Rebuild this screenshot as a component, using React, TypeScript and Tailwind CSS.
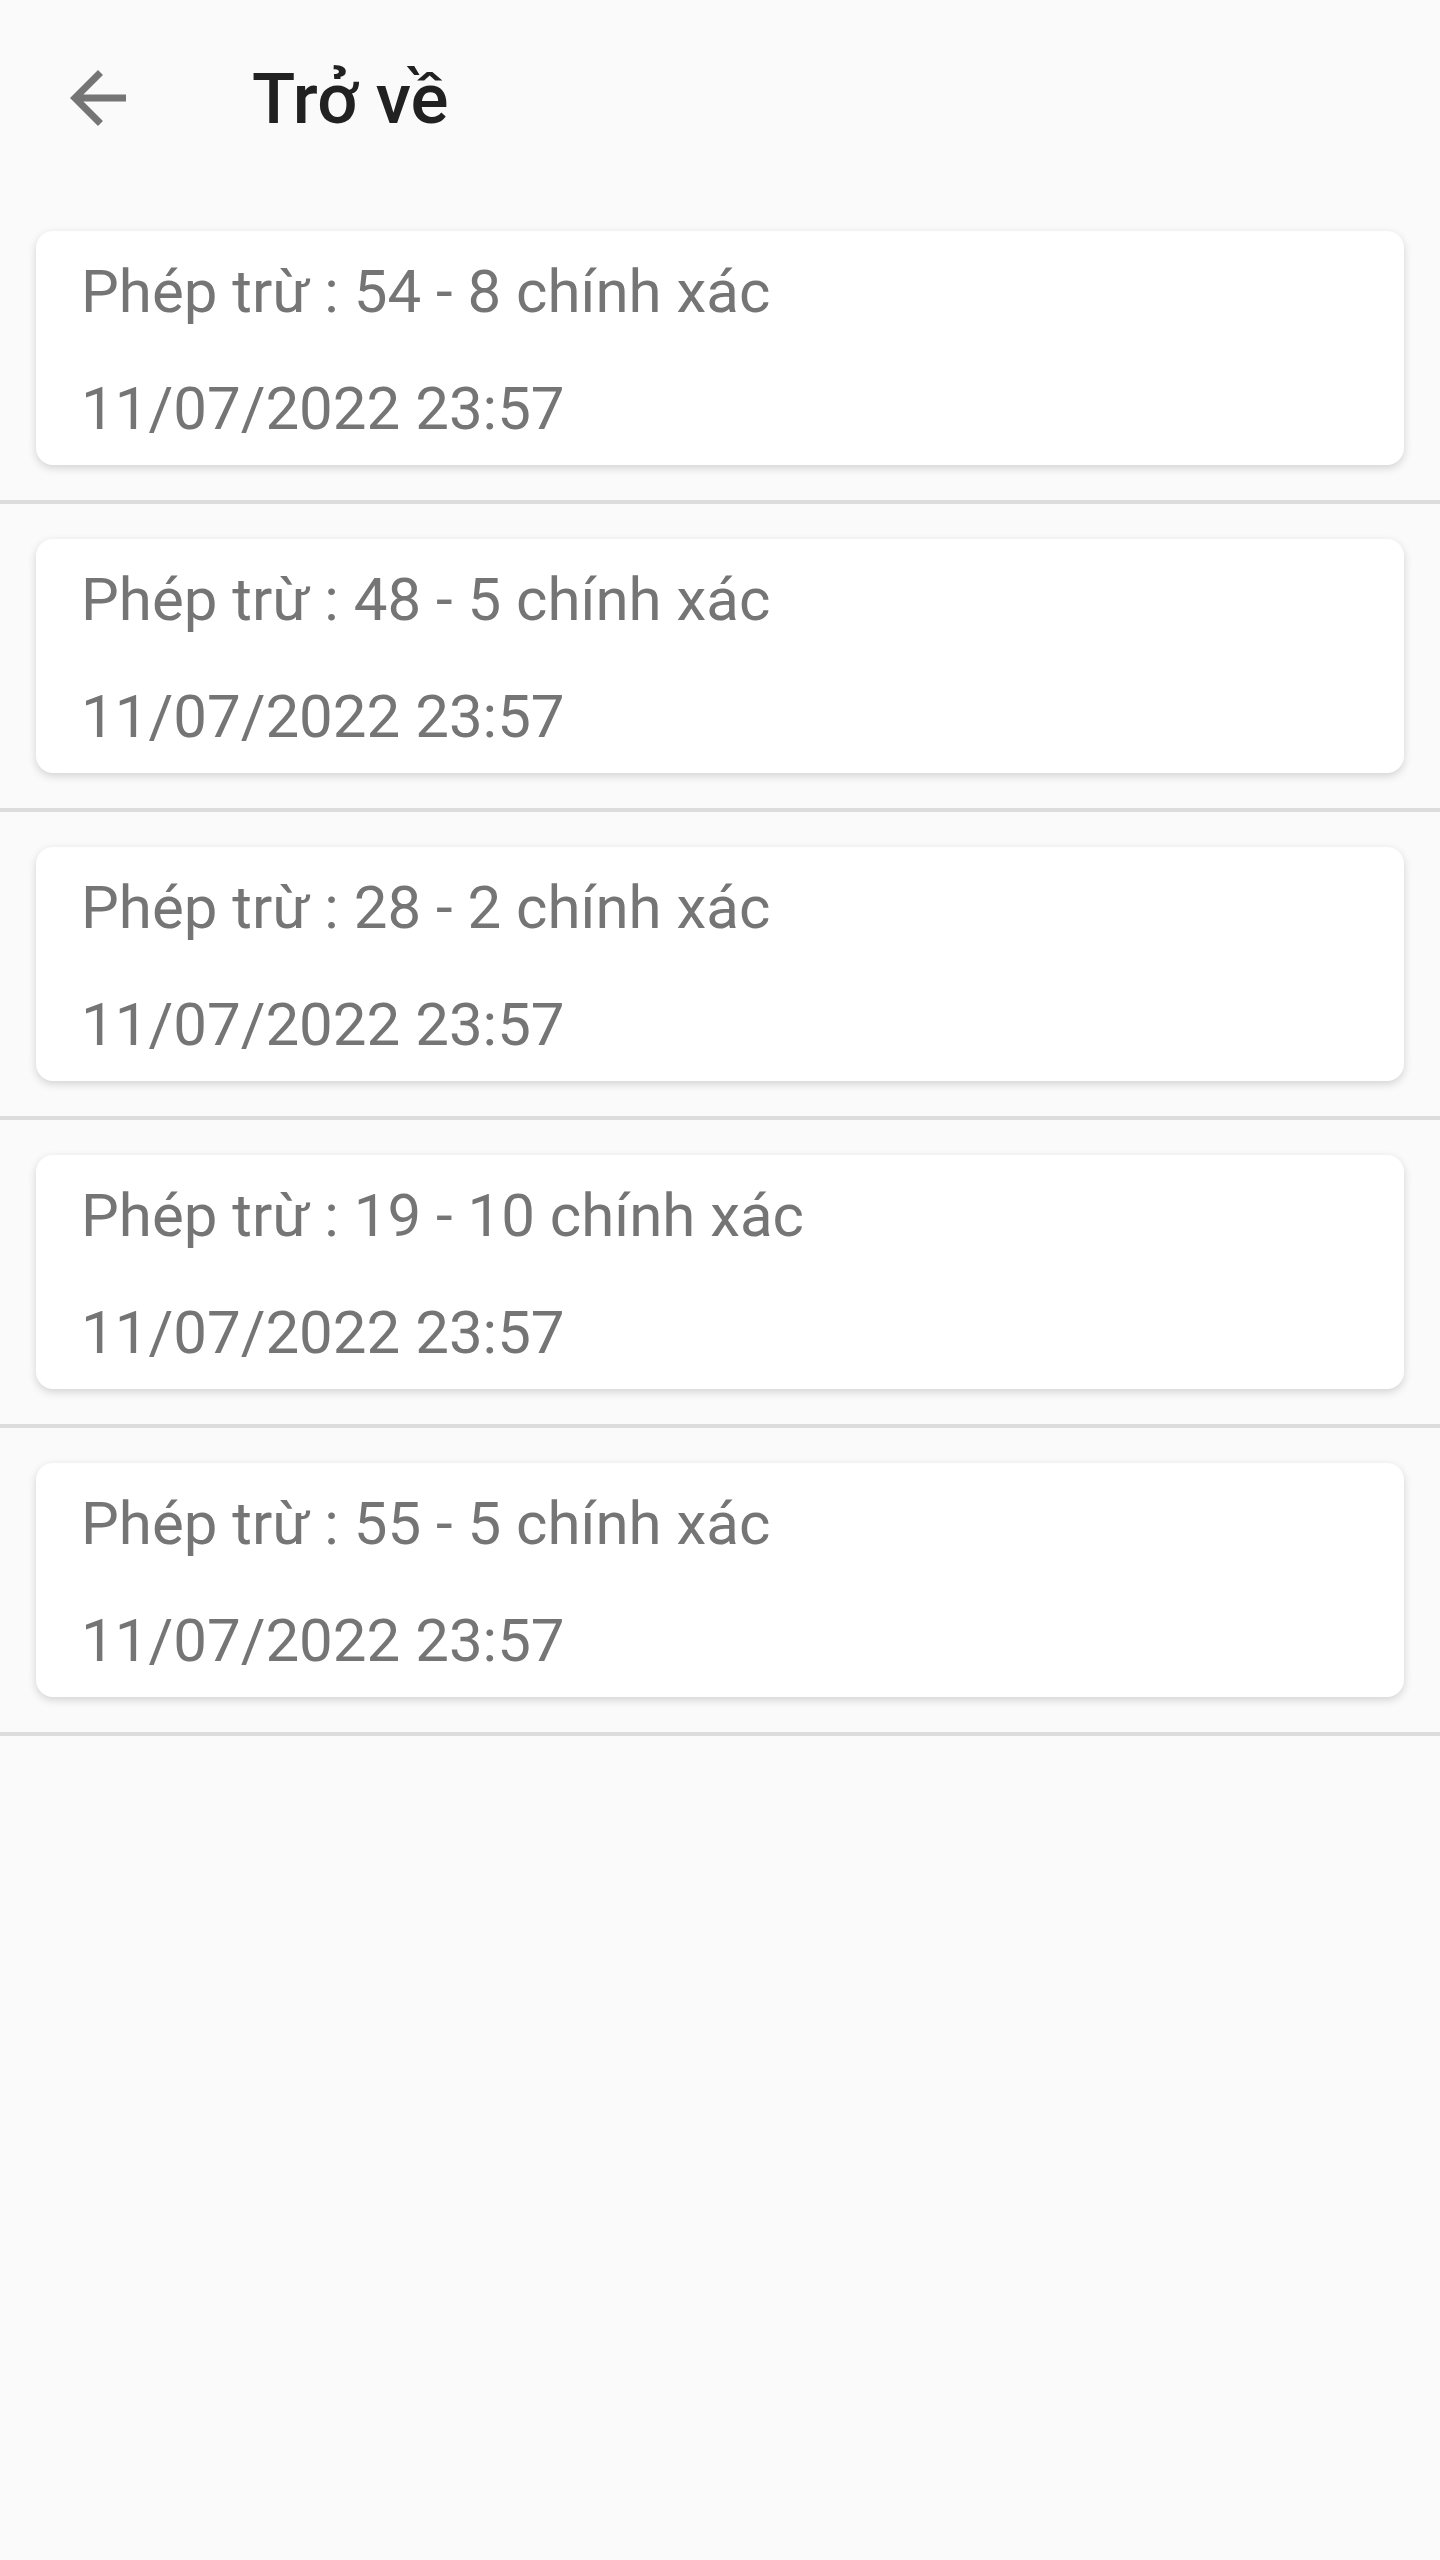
const results = [
  { a: 54, b: 8 },
  { a: 48, b: 5 },
  { a: 28, b: 2 },
  { a: 19, b: 10 },
  { a: 55, b: 5 },
]

function BackIcon() {
  return (
    <svg className="w-[84px] h-[84px]" viewBox="0 0 24 24" fill="#757575">
      <path d="M20 11H7.83l5.59-5.59L12 4l-8 8 8 8 1.41-1.41L7.83 13H20v-2z" />
    </svg>
  )
}

export default function App() {
  return (
    <div className="min-h-[2560px] w-full bg-[#fafafa] font-['Roboto',sans-serif]">
      {/* Toolbar */}
      <div className="h-[196px] flex items-center">
        <button className="ml-[56px] flex items-center justify-center">
          <BackIcon />
        </button>
        <h1 className="ml-[112px] text-[71px] leading-none font-medium text-[#212121]">Trở về</h1>
      </div>

      {/* History list */}
      <div>
        {results.map((r, i) => (
          <div key={i} className="px-[36px] py-[35px] border-b-[4px] border-[#dcdcdc]">
            <div className="bg-white rounded-[17px] shadow-[0_3px_9px_rgba(0,0,0,0.16)] pl-[45px] pr-6 pt-[26px] pb-[21px]">
              <p className="text-[60px] leading-[70px] text-[#757575]">
                Phép trừ : {r.a} - {r.b} chính xác
              </p>
              <p className="mt-[47px] text-[60px] leading-[70px] text-[#757575]">11/07/2022 23:57</p>
            </div>
          </div>
        ))}
      </div>
    </div>
  )
}
